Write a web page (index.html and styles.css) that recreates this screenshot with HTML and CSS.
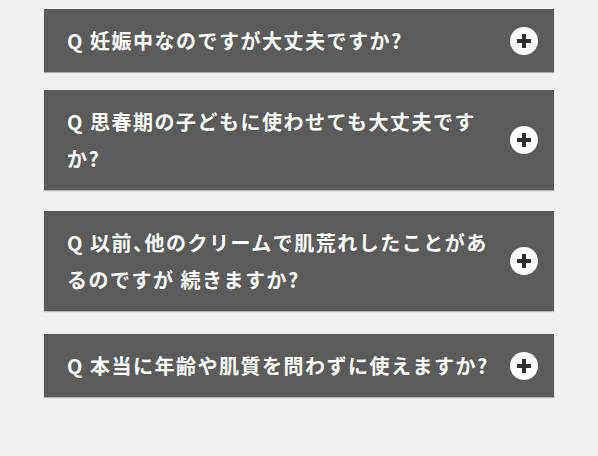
FILE: index.html
```html
<!DOCTYPE html>
<html lang="ja">

<head>
    <meta charset="UTF-8">
    <meta name="viewport" content="width=device-width, initial-scale=1.0">
    <title>よくある質問</title>
    <link rel="stylesheet" href="styles.css">
</head>

<body>
    <ul class="faq">
        <li class="faq-item">
            <p class="q">Q 妊娠中なのですが大丈夫ですか?</p>
            <span class="open">
                <svg width="28" height="28" viewBox="0 0 28 28"><circle cx="14" cy="14" r="14" fill="#fff"/><path d="M14 7v14M7 14h14" stroke="#2f2f2f" stroke-width="4"/></svg>
            </span>
        </li>
        <li class="faq-item">
            <p class="q">Q 思春期の子どもに使わせても大丈夫ですか?</p>
            <span class="open">
                <svg width="28" height="28" viewBox="0 0 28 28"><circle cx="14" cy="14" r="14" fill="#fff"/><path d="M14 7v14M7 14h14" stroke="#2f2f2f" stroke-width="4"/></svg>
            </span>
        </li>
        <li class="faq-item">
            <p class="q">Q 以前、他のクリームで肌荒れしたことがあるのですが 続きますか?</p>
            <span class="open">
                <svg width="28" height="28" viewBox="0 0 28 28"><circle cx="14" cy="14" r="14" fill="#fff"/><path d="M14 7v14M7 14h14" stroke="#2f2f2f" stroke-width="4"/></svg>
            </span>
        </li>
        <li class="faq-item">
            <p class="q">Q 本当に年齢や肌質を問わずに使えますか?</p>
            <span class="open">
                <svg width="28" height="28" viewBox="0 0 28 28"><circle cx="14" cy="14" r="14" fill="#fff"/><path d="M14 7v14M7 14h14" stroke="#2f2f2f" stroke-width="4"/></svg>
            </span>
        </li>
    </ul>
</body>

</html>
```

FILE: styles.css
```css
* {
    margin: 0;
    padding: 0;
}

body {
    background-color: #f1f1f1;
    font-family: "Noto Sans CJK JP", "Noto Sans", sans-serif;
}

ul li {
    list-style: none;
}

.faq {
    width: 510px;
    margin: 9px auto 0;
}

.faq-item {
    display: flex;
    align-items: center;
    padding: 13px 16px 13px 23px;
    margin-bottom: 21px;
    background-color: #5b5b5b;
    box-shadow: 0 1px 1px rgba(0, 0, 0, .25);
    cursor: pointer;
}

.faq-item:nth-child(1) {
    margin-bottom: 18px;
}

.faq-item:nth-child(3) {
    margin-bottom: 23px;
}

/* 約物は半角幅 */
.faq-item .q {
    flex: 1;
    color: #fff;
    font-size: 20px;
    font-weight: bold;
    line-height: 37px;
    letter-spacing: 1.5px;
    font-feature-settings: "halt";
}

.faq-item .open {
    display: block;
    width: 28px;
    height: 28px;
    margin-left: 20px;
}

.faq-item .open svg {
    display: block;
}
```
